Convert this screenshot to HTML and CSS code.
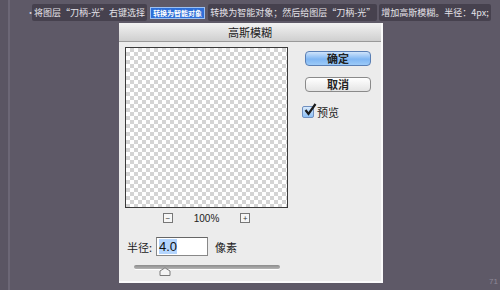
FILE: index.html
```html
<!DOCTYPE html>
<html lang="zh">
<head>
  <meta charset="UTF-8">
  <title>高斯模糊</title>
  <link rel="stylesheet" href="styles.css">
</head>
<body>
  <div class="page">
    <div class="rail"></div>
    <div class="main">
      <div class="caption">
        <span class="dot">·</span>
        <span class="chunk">将图层“刀柄-光”右键选择</span>
        <span class="tag">转换为智能对象</span>
        <span class="chunk">转换为智能对象；然后给图层“刀柄-光”</span>
        <span class="chunk">增加高斯模糊。半径：4px;</span>
      </div>

      <div class="dialog">
        <div class="titlebar">高斯模糊</div>
        <div class="dialog-body">
          <div class="left">
            <div class="preview"></div>
            <div class="zoom-row">
              <span class="zbtn">−</span>
              <span class="zoom-val">100%</span>
              <span class="zbtn">+</span>
            </div>
            <div class="radius-row">
              <span class="rlabel">半径:</span>
              <div class="rinput"><span class="sel">4.0</span></div>
              <span class="runit">像素</span>
            </div>
            <div class="slider">
              <div class="track"></div>
              <svg class="thumb" width="12" height="9" viewBox="0 0 12 9">
                <path d="M1 8.5 V4 L6 0.8 L11 4 V8.5 Z" fill="#f4f4f4" stroke="#7a7a7a" stroke-width="1"/>
              </svg>
            </div>
          </div>
          <div class="right">
            <button class="btn primary">确定</button>
            <button class="btn">取消</button>
            <label class="check">
              <span class="box">
                <svg width="14" height="14" viewBox="0 0 14 14">
                  <path d="M2.5 7 L5.5 11 L12.5 1" fill="none" stroke="#1a1a1a" stroke-width="2.2"/>
                </svg>
              </span>
              预览
            </label>
          </div>
        </div>
      </div>
    </div>
  </div>
  <div class="pageno">71</div>
</body>
</html>
```

FILE: styles.css
```css
body {
  margin: 0;
  width: 500px;
  height: 290px;
  overflow: hidden;
  background: #5e5967;
  font-family: "Noto Sans CJK SC", "Noto Sans", sans-serif;
}
.page {
  display: flex;
  height: 290px;
}
.rail {
  width: 8px;
  border-right: 2px solid #6c6776;
  background: #5a5563;
}
.main {
  flex: 1;
  display: flex;
  flex-direction: column;
}
.caption {
  display: flex;
  align-items: center;
  gap: 2px;
  height: 17px;
  margin-top: 4px;
  padding-left: 16px;
  font-size: 9px;
  color: #e4e2e8;
  white-space: nowrap;
}
.dot {
  width: 4px;
  color: #cfcbd4;
}
.chunk {
  background: #46414e;
  border-radius: 2px;
  height: 17px;
  line-height: 17px;
  padding: 0 2px;
}
.tag {
  background: #2e6fd8;
  border: 1px solid #9cc0f2;
  color: #fff;
  font-size: 7px;
  font-weight: bold;
  line-height: 10px;
  padding: 0 2px;
  margin: 0 1px;
}

.dialog {
  margin-top: 2px;
  margin-left: 109px;
  width: 264px;
  height: 260px;
  box-sizing: border-box;
  background: #ececec;
  border-right: 2px solid #fafafa;
  border-bottom: 2px solid #fafafa;
  display: flex;
  flex-direction: column;
}
.titlebar {
  height: 18px;
  line-height: 18px;
  text-align: center;
  font-size: 11px;
  color: #222;
  background: linear-gradient(#f2f2f2, #cfcfcf);
  border-bottom: 1px solid #9a9a9a;
}
.dialog-body {
  display: flex;
  padding: 5px 0 0 6px;
}
.left {
  width: 163px;
  display: flex;
  flex-direction: column;
}
.preview {
  width: 163px;
  height: 161px;
  box-sizing: border-box;
  border: 1px solid #3a3a3a;
  background-color: #fff;
  background-image: conic-gradient(#d4d4d4 25%, #fff 25% 50%, #d4d4d4 50% 75%, #fff 75%);
  background-size: 8px 8px;
}
.zoom-row {
  display: flex;
  align-items: center;
  justify-content: center;
  gap: 21px;
  height: 18px;
  margin-top: 1px;
}
.zbtn {
  width: 8px;
  height: 8px;
  border: 1px solid #777;
  background: #f6f6f6;
  font-size: 8px;
  line-height: 8px;
  text-align: center;
  color: #333;
}
.zoom-val {
  font-family: "Liberation Sans", sans-serif;
  font-size: 10px;
  color: #222;
}
.radius-row {
  display: flex;
  align-items: center;
  margin-top: 10px;
  height: 19px;
}
.rlabel {
  font-size: 11px;
  color: #222;
  width: 29px;
  margin-left: 2px;
}
.rinput {
  width: 52px;
  height: 19px;
  box-sizing: border-box;
  border: 1px solid #888;
  border-top-color: #666;
  background: #fff;
  padding: 1px 2px;
  font-family: "Liberation Sans", sans-serif;
  font-size: 13px;
  line-height: 15px;
  color: #111;
}
.sel {
  background: #b4d5fd;
}
.runit {
  font-size: 11px;
  color: #222;
  margin-left: 7px;
}
.slider {
  position: relative;
  margin-top: 9px;
  margin-left: 9px;
  width: 146px;
  height: 12px;
}
.track {
  height: 4px;
  border-radius: 2px;
  background: linear-gradient(#8c8c8c, #b4b4b4);
  box-shadow: 0 1px 0 #fff;
}
.thumb {
  position: absolute;
  left: 25px;
  top: 2px;
}
.right {
  display: flex;
  flex-direction: column;
  margin-left: 17px;
  padding-top: 4px;
}
.btn {
  width: 66px;
  height: 15px;
  padding: 0;
  border: 1px solid #8a8a8a;
  border-radius: 4px;
  background: linear-gradient(#ffffff, #e4e4e4);
  font-family: inherit;
  font-size: 11px;
  font-weight: bold;
  line-height: 13px;
  color: #222;
  margin-bottom: 11px;
}
.btn.primary {
  border-color: #5a7fb4;
  background: linear-gradient(#cfe4fb, #7fb6f3 55%, #9ccaf8);
}
.check {
  display: flex;
  align-items: center;
  gap: 3px;
  font-size: 11px;
  color: #222;
  margin-left: -3px;
  margin-top: 1px;
}
.box {
  position: relative;
  width: 10px;
  height: 10px;
  border: 1px solid #6f8fbf;
  border-radius: 2px;
  background: linear-gradient(#d9eafc, #8ec0f5);
}
.box svg {
  position: absolute;
  left: 0;
  top: -4px;
}
.pageno {
  position: absolute;
  left: 489px;
  top: 277px;
  font-family: "Liberation Sans", sans-serif;
  font-size: 8px;
  color: #8d8897;
}
```
